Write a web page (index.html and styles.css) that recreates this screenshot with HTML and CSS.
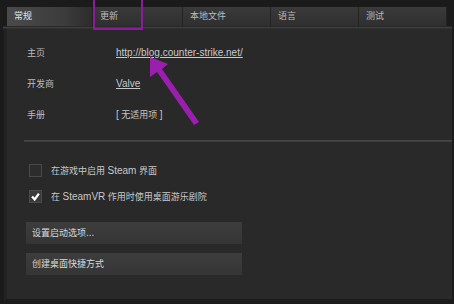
FILE: index.html
```html
<!DOCTYPE html>
<html>
<head>
<meta charset="utf-8">
<link rel="stylesheet" href="styles.css">
</head>
<body>
<div class="window">
  <div class="tabs">
    <div class="tab active w86">常规</div>
    <div class="tab w90">更新</div>
    <div class="tab w88">本地文件</div>
    <div class="tab w88">语言</div>
    <div class="tab w88">测试</div>
  </div>
  <div class="tabline"></div>
  <div class="panel">
    <div class="info">
      <div class="label">主页</div><div class="value"><span class="link lat">http://blog.counter-strike.net/</span></div>
      <div class="label">开发商</div><div class="value"><span class="link lat">Valve</span></div>
      <div class="label">手册</div><div class="value"><span class="lat">[</span> 无适用项 <span class="lat">]</span></div>
    </div>
    <div class="sep"></div>
    <div class="checks">
      <div class="check"><span class="box"></span><span>在游戏中启用 <span class="lat">Steam</span> 界面</span></div>
      <div class="check"><span class="box checked"><svg viewBox="0 0 13 13" width="11" height="11"><path d="M2.5 6.5 L5.5 10 L10.5 3" fill="none" stroke="#fff" stroke-width="2.6"/></svg></span><span>在 <span class="lat">SteamVR</span> 作用时使用桌面游乐剧院</span></div>
    </div>
    <div class="buttons">
      <div class="btn">设置启动选项<span class="lat">...</span></div>
      <div class="btn">创建桌面快捷方式</div>
    </div>
  </div>
  <div class="highlight"></div>
  <svg class="arrow" width="454" height="304" viewBox="0 0 454 304">
    <path d="M150 57 L168 64 L162 69 L199 122 L194 125 L157 72 L150 77 Z" fill="#9b1fae"/>
  </svg>
</div>
</body>
</html>
```

FILE: styles.css
```css
html, body {
  margin: 0;
  padding: 0;
}
body {
  width: 454px;
  height: 304px;
  background: #1b1b1b;
  font-family: "Liberation Sans", "Noto Sans CJK SC", sans-serif;
  font-size: 9px;
  color: #c4c4c4;
  overflow: hidden;
}
.lat {
  font-size: 10px;
}
.window {
  position: relative;
  width: 454px;
  height: 304px;
  padding-top: 7px;
  box-sizing: border-box;
}
.tabs {
  display: flex;
  margin-left: 7px;
  height: 19px;
}
.tab {
  box-sizing: border-box;
  height: 19px;
  line-height: 19px;
  padding-left: 7px;
  background: linear-gradient(#3a3a3a, #2f2f2f);
  border-right: 1px solid #242424;
  color: #bdbdbd;
}
.tab.active {
  background: linear-gradient(90deg, #4a4a4a, #3b3b3b 70%, #2c2c2c);
  color: #e6e6e6;
}
.w86 { width: 86px; }
.w90 { width: 90px; }
.w88 { width: 88px; }
.tabline {
  height: 3px;
  margin-left: 3px;
  margin-right: 2px;
  background: linear-gradient(#1e1e1e, #3e3e3e 50%, #2a2a2a);
}
.panel {
  margin-left: 4px;
  margin-right: 2px;
  height: 272px;
  box-sizing: border-box;
  background: #292929;
  border-left: 3px solid #222;
  border-bottom: 2px solid #1c1c1c;
  padding-top: 8px;
}
.info {
  display: grid;
  grid-template-columns: 89px auto;
  grid-auto-rows: 31px;
  align-items: center;
  padding-left: 20px;
}
.label {
  color: #bcbcbc;
}
.link {
  text-decoration: underline;
  color: #c8c8c8;
}
.sep {
  margin-top: 10px;
  margin-left: 17px;
  height: 2px;
  background: linear-gradient(#4a4a4a, #3a3a3a);
}
.checks {
  margin-top: 22px;
  padding-left: 22px;
  display: flex;
  flex-direction: column;
  gap: 13px;
}
.check {
  display: flex;
  align-items: center;
  gap: 9px;
  height: 13px;
  color: #c8c8c8;
}
.box {
  width: 13px;
  height: 13px;
  box-sizing: border-box;
  border: 1px solid #4a4a4a;
  background: #2c2c2c;
  display: flex;
  align-items: center;
  justify-content: center;
}
.box.checked {
  background: #3a3a3a;
}
.buttons {
  margin-top: 19px;
  padding-left: 19px;
  display: flex;
  flex-direction: column;
  gap: 9px;
}
.btn {
  width: 216px;
  height: 22px;
  line-height: 22px;
  padding-left: 6px;
  box-sizing: border-box;
  background: linear-gradient(#3d3d3d, #353535);
  color: #dadada;
}
.highlight {
  position: absolute;
  left: 93px;
  top: -2px;
  width: 50px;
  height: 32px;
  box-sizing: border-box;
  border: 2px solid #8e1a9e;
}
.arrow {
  position: absolute;
  left: 0;
  top: 0;
}
```
